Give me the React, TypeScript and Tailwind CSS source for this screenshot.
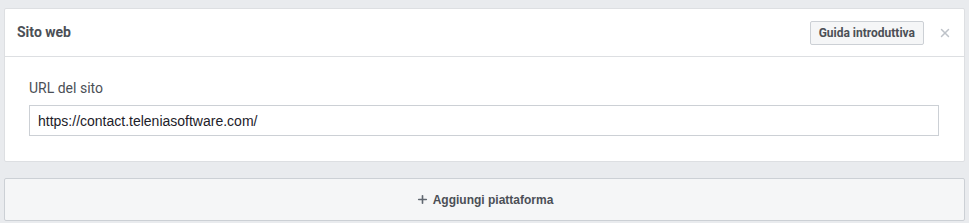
import { Plus, X } from "lucide-react";

export default function App() {
  return (
    <div className="min-h-[223px] bg-[#e9ebee] px-1 pt-2 font-['Roboto',sans-serif] text-[#1d2129]">
      <section className="rounded-[2px] border border-[#dddfe2] bg-white">
        <header className="flex h-[48px] items-center justify-between border-b border-[#dddfe2] pl-3 pr-3">
          <h2 className="text-[14px] font-bold text-[#4b4f56]">Sito web</h2>
          <div className="flex items-center gap-[14px]">
            <button className="h-[24px] rounded-[2px] border border-[#ccd0d5] bg-[#f5f6f7] px-2 text-[12px] font-bold text-[#4b4f56]">
              Guida introduttiva
            </button>
            <X className="h-[14px] w-[14px] text-[#bec2c9]" strokeWidth={2.5} />
          </div>
        </header>
        <div className="pb-[25px] pl-6 pr-[25px] pt-[22px]">
          <label className="block text-[14px] leading-[18px] text-[#4b4f56]">URL del sito</label>
          <input
            readOnly
            value="https://contact.teleniasoftware.com/"
            className="mt-[8px] h-[31px] w-full border border-[#ccd0d5] px-2 font-['Liberation_Sans',Arial,sans-serif] text-[14px] text-[#1d2129] outline-none"
          />
        </div>
      </section>
      <button className="mt-[16px] flex h-[43px] w-full items-center justify-center gap-1 rounded-[2px] border border-[#ccd0d5] bg-[#f5f6f7] font-['Liberation_Sans',Arial,sans-serif] text-[12px] font-bold text-[#4b4f56]">
        <Plus className="h-[13px] w-[13px] text-[#606770]" strokeWidth={3} />
        Aggiungi piattaforma
      </button>
    </div>
  );
}
